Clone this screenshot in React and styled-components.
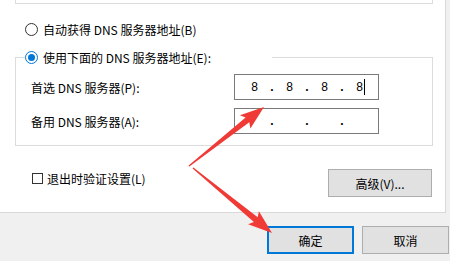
import React from 'react'
import styled, {createGlobalStyle} from 'styled-components'

const GlobalStyle = createGlobalStyle`
  html, body {
    margin: 0;
    padding: 0;
    background: #f0f0f0;
  }
  body {
    font-family: "Noto Sans CJK SC", "Noto Sans", sans-serif;
    font-size: 12px;
    color: #000;
  }
`

function arrowPoints(tail, tip, headLen, headW, shaftW){
    const dx = tip[0] - tail[0]
    const dy = tip[1] - tail[1]
    const len = Math.hypot(dx, dy)
    const ux = dx / len, uy = dy / len
    const nx = -uy, ny = ux
    const bx = tip[0] - ux * headLen
    const by = tip[1] - uy * headLen
    const pts = [
        [tail[0] + nx * 0.7, tail[1] + ny * 0.7],
        [bx + nx * shaftW, by + ny * shaftW],
        [bx - ux * 3 + nx * headW, by - uy * 3 + ny * headW],
        tip,
        [bx - ux * 3 - nx * headW, by - uy * 3 - ny * headW],
        [bx - nx * shaftW, by - ny * shaftW],
        [tail[0] - nx * 0.7, tail[1] - ny * 0.7],
    ]
    return pts.map(p => p[0].toFixed(1) + ',' + p[1].toFixed(1)).join(' ')
}

function IpField({values, caret}){
    return (
        <IpBox>
            {[0, 1, 2, 3].map(i => (
                <React.Fragment key={i}>
                    <IpCell>
                        {values[i]}
                        {caret && i === 3 && <Caret />}
                    </IpCell>
                    {i < 3 && <IpDot>.</IpDot>}
                </React.Fragment>
            ))}
        </IpBox>
    )
}

export default function App(){
    return (
        <Page>
            <GlobalStyle />
            <Panel>
                <PrevGroup />
                <RadioRow $indent={25} $top={17}>
                    <Radio />
                    <span>自动获得 DNS 服务器地址(B)</span>
                </RadioRow>
                <GroupBox>
                    <Legend>
                        <Radio $checked />
                        <span>使用下面的 DNS 服务器地址(E):</span>
                    </Legend>
                    <FieldRow $top={9}>
                        <FieldLabel>首选 DNS 服务器(P):</FieldLabel>
                        <IpField values={['8', '8', '8', '8']} caret />
                    </FieldRow>
                    <FieldRow $top={8}>
                        <FieldLabel>备用 DNS 服务器(A):</FieldLabel>
                        <IpField values={['', '', '', '']} />
                    </FieldRow>
                </GroupBox>
                <OptionsRow>
                    <CheckRow>
                        <CheckBox />
                        <span>退出时验证设置(L)</span>
                    </CheckRow>
                    <Button $width={104}>高级(V)...</Button>
                </OptionsRow>
            </Panel>
            <Footer>
                <Button $width={87} $primary>确定</Button>
                <Button $width={87}>取消</Button>
            </Footer>
            <Overlay width="450" height="261" viewBox="0 0 450 261">
                <polygon fill="#f03a35" points={arrowPoints([189, 166], [264, 107], 21, 8.5, 3)} />
                <polygon fill="#f03a35" points={arrowPoints([193, 168], [272, 233], 21, 8.5, 3)} />
            </Overlay>
        </Page>
    )
}

const Page = styled.div`
  position: relative;
  width: 450px;
  height: 261px;
  overflow: hidden;
  background: #f0f0f0;
`

const Panel = styled.div`
  box-sizing: border-box;
  width: 446px;
  height: 213px;
  background: #fff;
  border-right: 1px solid #d9d9d9;
  border-bottom: 1px solid #d9d9d9;
  display: flex;
  flex-direction: column;
`

const PrevGroup = styled.div`
  box-sizing: border-box;
  margin-left: 15px;
  width: 418px;
  height: 4px;
  border: 1px solid #dcdcdc;
  border-top: none;
`

const RadioRow = styled.label`
  display: flex;
  align-items: center;
  gap: 5px;
  height: 16px;
  margin-left: ${p => p.$indent}px;
  margin-top: ${p => p.$top}px;
  white-space: nowrap;
`

const Radio = styled.span`
  box-sizing: border-box;
  width: 13px;
  height: 13px;
  border-radius: 50%;
  border: 1px solid ${p => p.$checked ? '#0078d7' : '#333'};
  background: #fff;
  display: flex;
  align-items: center;
  justify-content: center;
  flex-shrink: 0;

  &::after {
    content: '';
    display: ${p => p.$checked ? 'block' : 'none'};
    width: 7px;
    height: 7px;
    border-radius: 50%;
    background: #0078d7;
  }
`

const GroupBox = styled.div`
  box-sizing: border-box;
  margin-left: 15px;
  margin-top: 20px;
  width: 418px;
  border: 1px solid #dcdcdc;
  padding: 0 0 11px 15px;
  display: flex;
  flex-direction: column;
`

const Legend = styled.div`
  display: flex;
  align-items: center;
  gap: 5px;
  height: 16px;
  width: 247px;
  margin-top: -9px;
  margin-left: -6px;
  background: #fff;
  white-space: nowrap;
`

const FieldRow = styled.div`
  display: flex;
  align-items: center;
  margin-top: ${p => p.$top}px;
`

const FieldLabel = styled.label`
  width: 203px;
  white-space: nowrap;
`

const IpBox = styled.div`
  box-sizing: border-box;
  width: 145px;
  height: 26px;
  border: 1px solid #7a7a7a;
  padding-left: 5px;
  display: flex;
  align-items: center;
  font-family: "Liberation Sans", Arial, sans-serif;
  font-size: 12px;
`

const IpCell = styled.span`
  position: relative;
  width: 29px;
  text-align: center;
`

const IpDot = styled.span`
  width: 6px;
  text-align: center;
  font-weight: bold;
`

const Caret = styled.span`
  position: absolute;
  left: 19px;
  top: -1px;
  height: 16px;
  border-left: 1px solid #000;
`

const OptionsRow = styled.div`
  display: flex;
  align-items: flex-start;
  justify-content: space-between;
  margin-top: 23px;
  padding-left: 32px;
  width: 432px;
  box-sizing: border-box;
`

const CheckRow = styled.label`
  display: flex;
  align-items: center;
  gap: 4px;
  height: 14px;
  margin-top: 2px;
  white-space: nowrap;
`

const CheckBox = styled.span`
  box-sizing: border-box;
  width: 11px;
  height: 11px;
  border: 1px solid #333;
  background: #fff;
`

const Button = styled.button`
  box-sizing: border-box;
  width: ${p => p.$width}px;
  height: 28px;
  padding: 0;
  background: #e1e1e1;
  border: ${p => p.$primary ? '2px solid #0078d7' : '1px solid #adadad'};
  font-family: "Noto Sans CJK SC", "Noto Sans", sans-serif;
  font-size: 12px;
  color: #000;
`

const Footer = styled.div`
  display: flex;
  justify-content: flex-end;
  gap: 8px;
  padding: 13px 1px 0 0;
`

const Overlay = styled.svg`
  position: absolute;
  left: 0;
  top: 0;
  pointer-events: none;
`
